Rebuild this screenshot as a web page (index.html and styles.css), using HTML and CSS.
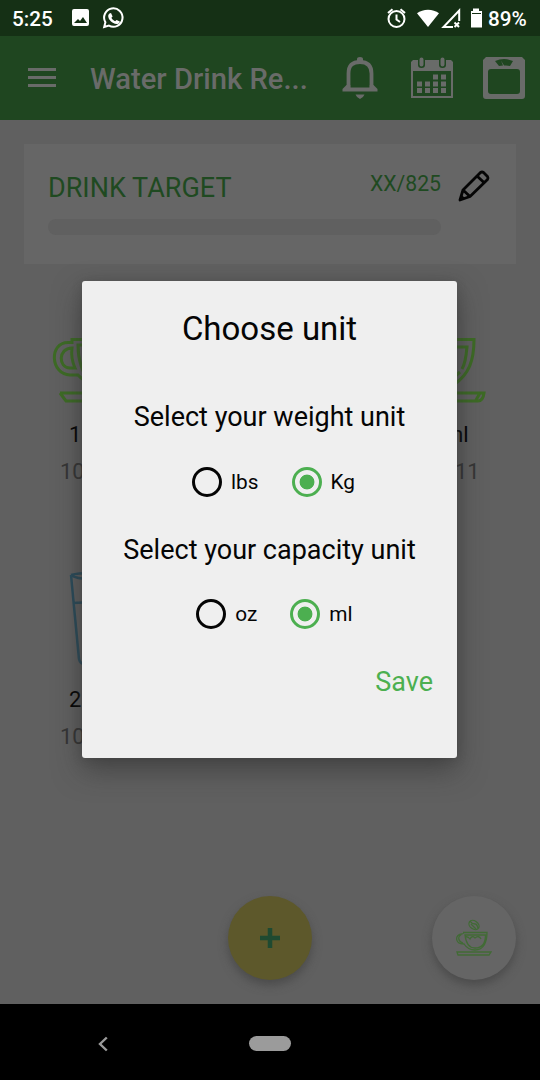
FILE: index.html
```html
<!DOCTYPE html>
<html lang="en">
<head>
<meta charset="utf-8">
<title>Water Drink Reminder</title>
<link rel="stylesheet" href="styles.css">
</head>
<body>
<div class="phone">
  <header class="status">
    <span class="clock">5:25</span>
    <svg class="status-left" width="54" height="24" viewBox="0 0 54 24">
      <path fill="#fff" fill-rule="evenodd" d="M2 3h13a2 2 0 0 1 2 2v13a2 2 0 0 1-2 2H2a2 2 0 0 1-2-2V5a2 2 0 0 1 2-2zM2 17h13l-4-6-3 4-2-2z"/>
      <path fill="none" stroke="#fff" stroke-width="2" d="M32.2 21l1.2-4.8a9.2 9.2 0 1 1 3.5 3.4z"/>
      <path fill="#fff" d="M37.500 7.500l1.500-.5 1.600 3.500-1.200 1.300c.8 1.700 2 2.700 3.700 3.500l1.500-1.300 3.200 1.600c.1 1.600-1.600 2.800-3.300 2.500-4.400-.8-8-4.300-8.300-7.900-.1-1.100.5-2.100 1.300-2.700z"/>
    </svg>
    <svg class="status-right" width="98" height="24" viewBox="0 0 98 24">
      <g fill="none" stroke="#fff" stroke-width="2"><circle cx="9.500" cy="13" r="8"/><path d="M9.500 8.500v5l3.500 2.500M1 7l4.500-3.800M18 7l-4.500-3.800"/></g>
      <path fill="#fff" d="M30 7.200c6-4.700 16-4.700 22 0L41 21z"/>
      <path fill="none" stroke="#fff" stroke-width="2" d="M66 21h-9.500L72.200 4.500V15M67.500 16.500l4.500 4.500m0-4.500l-4.500 4.500"/>
      <path fill="#fff" d="M86 2.500h6V5h3v16.500H84V5h2z"/>
      <path stroke="#153015" d="M85 7.500h9"/>
    </svg>
    <span class="battery">89%</span>
  </header>

  <div class="appbar">
    <svg class="menu" width="28" height="20" viewBox="0 0 28 20"><path stroke="#696b69" stroke-width="2.800" d="M0 1.500h28M0 9.500h28M0 17.500h28"/></svg>
    <h1 class="title">Water Drink Re...</h1>
    <svg class="bell" width="36" height="44" viewBox="0 0 36 44">
      <path fill="none" stroke="#696b69" stroke-width="3.800" d="M6.500 34V17.500C6.500 9 11 6 18 6s11.500 3 11.500 11.500V34"/>
      <path fill="#696b69" d="M15 5V3q0-2 3-2t3 2v2zM4.500 29h3.800v2.500h19.400V29h3.800l4 4v2.500H.5V33zM13.500 38.500h9q-1 3-4.500 4.500-3.500-1.500-4.500-4.500z"/>
    </svg>
    <svg class="calendar" width="42" height="42" viewBox="0 0 42 42">
      <path fill="#696b69" fill-rule="evenodd" d="M2 3h5v5q0 3 3.500 3T14 8V3h14v5q0 3 3.500 3T35 8V3h5l2 2v36H0V5zM2 14v25h38V14z"/>
      <path stroke="#696b69" stroke-width="4" stroke-linecap="round" d="M10.500 2.500v5M31.500 2.500v5"/>
      <path stroke="#696b69" stroke-width="5" stroke-dasharray="5 3" d="M22 20h13M6 27h29M6 33.500h29"/>
    </svg>
    <svg class="scale" width="42" height="42" viewBox="0 0 42 42">
      <path fill="#696b69" fill-rule="evenodd" d="M3 0h36l3 3v36q0 3-3 3H3q-3 0-3-3V3zM8 12q-3 0-3 3v19q0 3 3 3h26q3 0 3-3V15q0-3-3-3zM12 4l4 5 4-.5-2-5 3 5h2l4 .5 3-5q-9-4-18 0z"/>
    </svg>
  </div>

  <main class="content">
    <section class="target">
      <div class="progress-column">
        <div class="target-labels"><span class="target-name">DRINK TARGET</span><span class="amount">XX/825</span></div>
        <div class="progress"></div>
      </div>
      <svg class="pencil" width="34" height="34" viewBox="0 0 34 34"><g fill="none" stroke="#050505" stroke-width="2.800" stroke-linejoin="round"><path d="M3 31l3-10L23.500 3.500q1.500-1 3 0l4 4q1 1.500 0 3L13 27.500zM6 21l7 6.500M20 7l7.500 7"/></g><path fill="#050505" d="M2.500 31.500l1.800-6 4 4z"/></svg>
    </section>

    <section class="drinks">
      <article class="drink">
        <svg class="drink-art" width="80" height="110" viewBox="0 0 80 110"><g fill="none" stroke="#3d6b25" stroke-width="3"><path d="M60 25.500H19v3h-4C-4 28.500-3 60 17 61h8c8 9 21 11 33 11M60 31H25c0 13 3 26 12 37M19 34c-14 0-14 20-2 20h5c-3-7-4-13-3-20zM32 31q0 15 8 26M7 79h53M7 79l6 8h47"/></g></svg>
        <span class="drink-size">1</span><span class="drink-time">10</span>
      </article>
      <article class="drink drink-right">
        <svg class="drink-art" width="80" height="110" viewBox="0 0 80 110"><g fill="none" stroke="#3d6b25" stroke-width="3"><path d="M30 25.500h30c0 21-5 35-20 45M30 33h23c-1 11-2 17-5 22M46 58l-7 6M30 79h40q-1 8-6 8H30M66 79l-4 7"/></g></svg>
        <span class="drink-size">ml</span><span class="drink-time">11</span>
      </article>
      <article class="drink">
        <svg class="drink-art" width="80" height="110" viewBox="0 0 80 110"><g fill="none" stroke="#2b4c5b" stroke-width="2.500"><path d="M18 0l8 84q1 5 6 5h29M18 0q7-2 20-2M18 0q5 4 20 4M20 28q10-1 20 0"/></g></svg>
        <span class="drink-size">2</span><span class="drink-time">10</span>
      </article>
    </section>

    <div class="actions">
      <div class="fab fab-add"><svg width="20" height="20" viewBox="0 0 20 20"><path stroke="#1f4a31" stroke-width="4.500" d="M10 0v20M0 10h20"/></svg></div>
      <div class="fab fab-cup"><svg width="38" height="38" viewBox="0 0 38 38"><g fill="none" stroke="#416b35" stroke-width="1.300"><path d="M8 13.500h24c0 9-3 17.500-12 17.500-6 0-9-3-11-6C-1 25 0 15 7 15c-5 3-4 7 1 9M10 16h20.500c0 8-3 13-10.500 13-6 0-9-4-10-13zM10 18q3-1 5 2 2-4 5-1 4-3 6 1M2 33h34l-2 3H3z"/><ellipse cx="19" cy="6" rx="5.500" ry="4" transform="rotate(35 19 6)"/><path d="M15 2q2 3 5 3 2 0 3 4M16 5l5 5"/></g></svg></div>
    </div>
  </main>

  <nav class="navigation">
    <svg class="back" width="10" height="16" viewBox="0 0 10 16"><path fill="none" stroke="#9b9b9b" stroke-width="2.400" d="M8.800 1.500L2 8l6.800 6.500"/></svg>
    <div class="home"></div>
  </nav>

  <div class="dialog" role="dialog">
    <h2 class="dialog-title">Choose unit</h2>
    <p class="question">Select your weight unit</p>
    <div class="choices weight"><label class="choice"><i class="radio"></i>lbs</label><label class="choice"><i class="radio selected"></i>Kg</label></div>
    <p class="question question-capacity">Select your capacity unit</p>
    <div class="choices capacity"><label class="choice"><i class="radio"></i>oz</label><label class="choice"><i class="radio selected"></i>ml</label></div>
    <div class="save">Save</div>
  </div>
</div>
</body>
</html>
```
FILE: styles.css
```css
* { box-sizing: border-box; }
body { margin: 0; font-family: Roboto, sans-serif; color: #050505; }
svg { display: block; flex-shrink: 0; }
h1, h2, p { margin: 0; font-weight: 400; white-space: nowrap; }
.phone { position: relative; width: 540px; height: 1080px; overflow: hidden; background: #606060; display: flex; flex-direction: column; }
.status { height: 36px; flex-shrink: 0; background: #153015; color: #fff; display: flex; align-items: center; padding: 0 0 1px 12px; font-size: 20.7px; font-weight: 500; }
.clock { width: 60px; padding-top: 2px; }
.status-right { margin-left: 261px; }
.battery { margin-left: 3px; padding-top: 2px; font-size: 20.7px; }
.appbar { height: 84px; flex-shrink: 0; background: #1f4620; display: flex; align-items: center; padding-left: 28px; }
.title { width: 218px; margin: 2px 0 0 34px; color: #696b69; font-size: 29.2px; line-height: 34px; font-weight: 500; }
.bell { margin-left: 34px; }
.calendar { margin-left: 33px; }
.scale { margin-left: 30px; }
.content { height: 884px; flex-shrink: 0; padding: 24px 24px 0; }
.target { height: 120px; background: #666; display: flex; padding: 24px; }
.progress-column { width: 393px; }
.target-labels { height: 51px; display: flex; justify-content: space-between; color: #1f4a21; }
.target-name { font-size: 27px; line-height: 41px; white-space: nowrap; }
.amount { font-size: 21.2px; line-height: 32px; }
.progress { height: 16px; border-radius: 8px; background: #606060; }
.pencil { margin: 1px 0 0 16px; }
.drinks { display: grid; grid-template-columns: 356px 112px; column-gap: 24px; padding-top: 50px; grid-auto-rows: 265px; }
.drink { display: flex; flex-direction: column; padding-left: 29px; }
.drink-art { overflow: visible; }
.drink-size { font-size: 22px; line-height: 26px; margin: -2px 0 0 16px; }
.drink-time { font-size: 22px; line-height: 26px; margin: 11px 0 0 7px; color: #353535; }
.drink-right { padding-left: 10px; }
.drink-right .drink-size { margin-left: 30px; }
.drink-right .drink-time { margin-left: 41px; }
.drink:nth-child(3) .drink-art { margin: -4px 0 4px; }
.actions { display: flex; padding: 52px 0 0 204px; gap: 120px; }
.fab { width: 84px; height: 84px; border-radius: 50%; display: flex; align-items: center; justify-content: center; box-shadow: 0 5px 10px #404040aa; }
.fab-add { background: #5d582b; }
.fab-cup { background: #656565; }
.navigation { height: 76px; flex-shrink: 0; background: #000; display: flex; align-items: center; padding: 3px 0 0 98px; }
.home { width: 42px; height: 15px; margin-left: 141px; border-radius: 8px; background: #9b9b9b; }
.dialog { position: absolute; left: 82px; top: 281px; width: 375px; height: 477px; border-radius: 3px; background: #efefef; box-shadow: 0 12px 28px #28282880, 0 1px 8px #40404066; padding-top: 28px; text-align: center; }
.dialog-title { font-size: 33px; line-height: 40px; }
.question { font-size: 27px; line-height: 32px; margin-top: 52px; }
.choices { display: flex; justify-content: center; margin-top: 33px; padding-left: 8px; gap: 33px; }
.capacity { padding-left: 10px; margin-top: 32px; }
.choice { display: flex; align-items: center; gap: 9px; height: 32px; font-size: 20.8px; }
.radio { width: 30px; height: 30px; border: 3px solid #050505; border-radius: 50%; }
.radio.selected { border-color: #4caf50; background: radial-gradient(circle, #4caf50 0 7px, transparent 7.8px); }
.question-capacity { margin-top: 36px; }
.save { color: #4caf50; font-size: 27px; line-height: 32px; margin-top: 36px; padding-right: 24px; text-align: right; }
```
